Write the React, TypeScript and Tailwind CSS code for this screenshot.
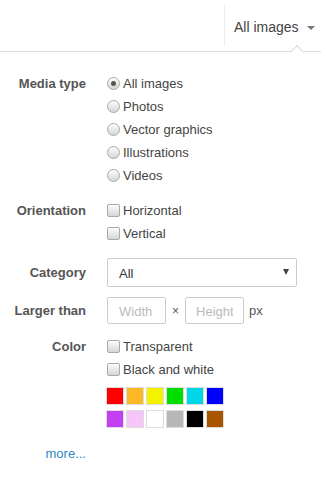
import React, { useState } from 'react';

const font = { fontFamily: '"Liberation Sans", Arial, sans-serif' };

const swatches = [
  '#ff0000', '#fdb827', '#f3f300', '#00dd00', '#00d6e6', '#0000ff',
  '#c53ff2', '#f6c6f8', '#ffffff', '#b8b8b8', '#000000', '#a85500',
];

const mediaTypes = ['All images', 'Photos', 'Vector graphics', 'Illustrations', 'Videos'];

const Radio: React.FC<{ checked: boolean }> = ({ checked }) => (
  <span className="flex items-center justify-center w-[13px] h-[13px] rounded-full border border-[#a9a9a9] bg-gradient-to-b from-[#fdfdfd] to-[#d6d6d6] shrink-0">
    {checked && <span className="w-[5px] h-[5px] rounded-full bg-[#555]"></span>}
  </span>
);

const Checkbox: React.FC = () => (
  <span className="w-[13px] h-[13px] rounded-[2px] border border-[#a9a9a9] bg-gradient-to-b from-[#fdfdfd] to-[#d6d6d6] shrink-0"></span>
);

const Row: React.FC<{ label: string; children: React.ReactNode; className?: string }> = ({ label, children, className }) => (
  <div className={`flex ${className ?? ''}`}>
    <div className="w-[86px] shrink-0 text-right font-bold text-[#555] leading-[23px]">{label}</div>
    <div className="ml-[21px] flex-1">{children}</div>
  </div>
);

const App: React.FC = () => {
  const [media, setMedia] = useState('All images');

  return (
    <div className="w-[321px] h-[477px] bg-white text-[13px] overflow-hidden" style={font}>
      {/* top bar */}
      <div className="relative h-[52px] border-b border-[#dcdcdc] flex justify-end">
        <div className="my-[5px] border-l border-[#ececec] w-[97px] flex items-center pl-[9px] pt-[4px] text-[14px] text-[#444]">
          All images
          <span className="ml-[8px] w-0 h-0 border-l-[4px] border-r-[4px] border-t-[4px] border-l-transparent border-r-transparent border-t-[#777]"></span>
        </div>
        <span className="absolute left-[292px] top-[47px] w-[10px] h-[10px] bg-white border-l border-t border-[#dcdcdc] rotate-45"></span>
      </div>

      <div className="pt-[20px]">
        <Row label="Media type">
          {mediaTypes.map((m) => (
            <div key={m} className="flex items-center gap-[3px] h-[23px] text-[#444] cursor-pointer" onClick={() => setMedia(m)}>
              <Radio checked={media === m} />
              <span>{m}</span>
            </div>
          ))}
        </Row>

        <Row label="Orientation" className="mt-[12px]">
          {['Horizontal', 'Vertical'].map((o) => (
            <div key={o} className="flex items-center gap-[3px] h-[23px] text-[#444]">
              <Checkbox />
              <span>{o}</span>
            </div>
          ))}
        </Row>

        <div className="flex mt-[13px] items-center">
          <div className="w-[86px] shrink-0 text-right font-bold text-[#555]">Category</div>
          <div className="ml-[21px] w-[190px] h-[29px] border border-[#ccc] rounded-[2px] flex items-center justify-between pl-[11px] pr-[7px] pt-[3px] text-[#333]">
            <span>All</span>
            <span className="w-0 h-0 border-l-[3px] border-r-[3px] border-t-[6px] border-l-transparent border-r-transparent border-t-[#444] mb-[4px]"></span>
          </div>
        </div>

        <div className="flex mt-[10px] items-center">
          <div className="w-[86px] shrink-0 text-right font-bold text-[#555]">Larger than</div>
          <div className="ml-[21px] flex items-center">
            <input placeholder="Width" className="w-[59px] h-[27px] border border-[#ccc] rounded-[2px] px-[11px] pt-[2px] text-[#333] placeholder:text-[#bbb] outline-none" style={font} />
            <span className="mx-[6px] text-[#555] text-[12px]">×</span>
            <input placeholder="Height" className="w-[59px] h-[27px] border border-[#ccc] rounded-[2px] px-[10px] pt-[2px] text-[#333] placeholder:text-[#bbb] outline-none" style={font} />
            <span className="ml-[5px] text-[#555]">px</span>
          </div>
        </div>

        <Row label="Color" className="mt-[11px]">
          {['Transparent', 'Black and white'].map((o) => (
            <div key={o} className="flex items-center gap-[3px] h-[23px] text-[#444]">
              <Checkbox />
              <span>{o}</span>
            </div>
          ))}
          <div className="grid grid-cols-[repeat(6,18px)] gap-x-[2px] gap-y-[5px] mt-[6px] -ml-[1px]">
            {swatches.map((c) => (
              <span key={c} className="w-[18px] h-[18px] border border-[#ddd]" style={{ backgroundColor: c }}></span>
            ))}
          </div>
        </Row>

        <div className="w-[86px] text-right mt-[16px] text-[#2a88c8]">more...</div>
      </div>
    </div>
  );
};

export default App;
